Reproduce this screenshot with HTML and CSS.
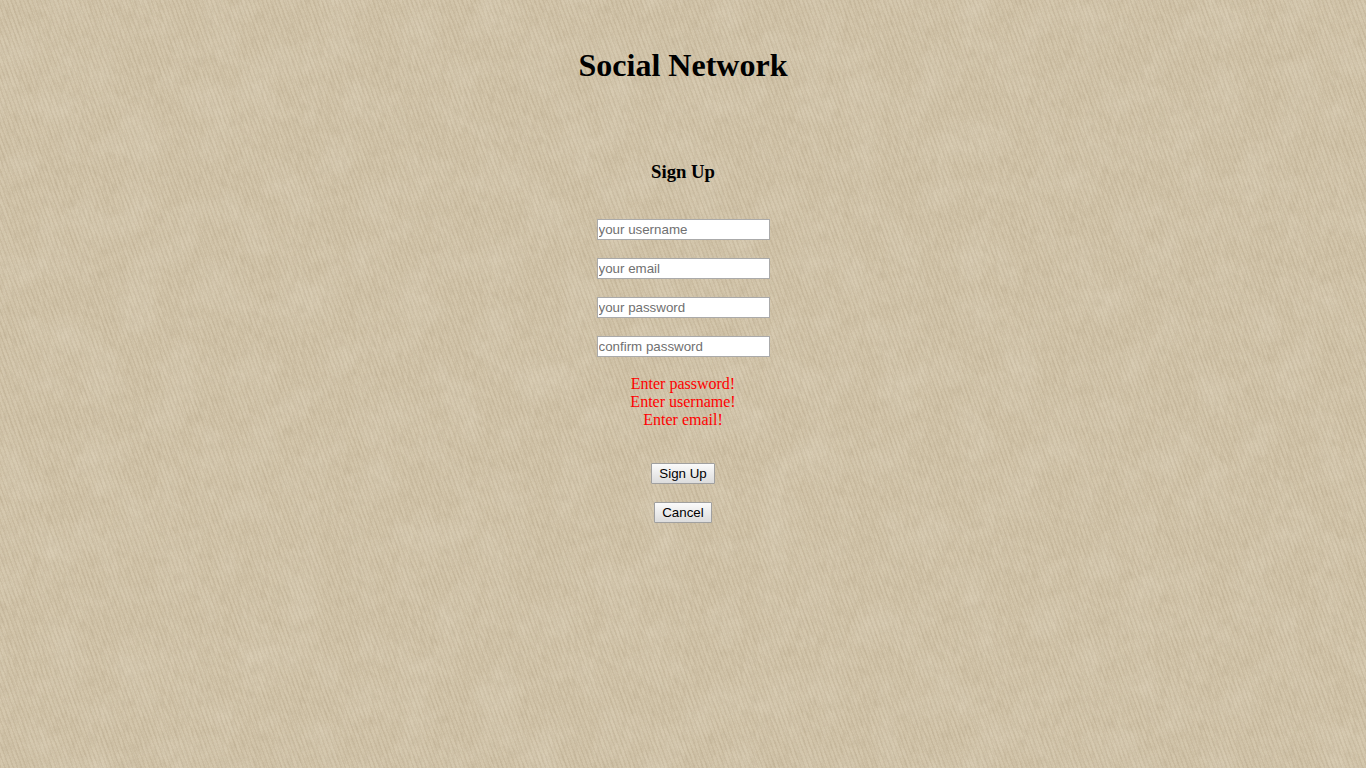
FILE: index.html
```html
<!DOCTYPE html>
<html lang="en">
<head>
  <meta charset="UTF-8">
  <title>Social Network</title>
  <link rel="stylesheet" href="styles.css">
</head>
<body>
  <!-- cloth texture behind the page -->
  <svg class="cloth" width="1366" height="768" aria-hidden="true">
    <filter id="twill" x="0" y="0" width="100%" height="100%">
      <feTurbulence type="fractalNoise" baseFrequency="0.45 0.09" numOctaves="2" seed="4"/>
      <feColorMatrix type="matrix" values="0 0 0 0 0.42  0 0 0 0 0.34  0 0 0 0 0.22  0.6 0 0 0 -0.23"/>
    </filter>
    <filter id="blotch" x="0" y="0" width="100%" height="100%">
      <feTurbulence type="fractalNoise" baseFrequency="0.025" numOctaves="3" seed="9"/>
      <feColorMatrix type="matrix" values="0 0 0 0 1  0 0 0 0 0.97  0 0 0 0 0.88  0.25 0 0 0 -0.1"/>
    </filter>
    <rect x="-300" y="-300" width="2000" height="1400" transform="rotate(-20 683 384)" filter="url(#twill)"/>
    <rect width="1366" height="768" filter="url(#blotch)"/>
  </svg>
  <div class="page">
    <h1 class="site-title">Social Network</h1>
    <form class="signup-form">
      <h3 class="signup-title">Sign Up</h3>
      <div class="signup-fields">
        <input class="signup-input" type="text" placeholder="your username">
        <input class="signup-input" type="text" placeholder="your email">
        <input class="signup-input" type="password" placeholder="your password">
        <input class="signup-input" type="password" placeholder="confirm password">
      </div>
      <div class="signup-errors">
        <div>Enter password!</div>
        <div>Enter username!</div>
        <div>Enter email!</div>
      </div>
      <div class="signup-actions">
        <button class="signup-button" type="button">Sign Up</button>
        <button class="signup-button" type="button">Cancel</button>
      </div>
    </form>
  </div>
</body>
</html>
```
FILE: styles.css
```css
html, body {
  height: 100%;
}
body {
  margin: 0;
  overflow: hidden;
  color: #000;
  font-family: "Liberation Serif", serif;
  background-color: #d1c3a8;
  background-image: repeating-linear-gradient(70deg, rgba(120, 100, 70, 0.08) 0 1.5px, rgba(255, 250, 235, 0.05) 1.5px 4px);
}
.cloth {
  position: absolute;
  top: 0;
  left: 0;
}
.page {
  position: relative;
}
.site-title {
  margin: 0;
  padding-top: 47px;
  font-size: 32px;
  line-height: 37px;
  text-align: center;
}
.signup-form {
  display: flex;
  flex-direction: column;
  align-items: center;
  padding-top: 77px;
}
.signup-title {
  margin: 0;
  font-size: 18.72px;
  line-height: 22px;
}
.signup-fields {
  display: flex;
  flex-direction: column;
  gap: 18px;
  margin-top: 36px;
}
.signup-input {
  box-sizing: border-box;
  width: 173px;
  height: 21px;
  padding: 1px;
  border: 1px solid #aaa;
  border-radius: 0;
  background: #fff;
  font-family: "Liberation Sans", Arial, sans-serif;
  font-size: 13.33px;
  outline: none;
}
.signup-input::placeholder {
  color: #707070;
}
.signup-errors {
  margin-top: 18px;
  color: #f00;
  font-size: 16px;
  line-height: 18px;
  text-align: center;
}
.signup-actions {
  display: flex;
  flex-direction: column;
  align-items: center;
  gap: 18px;
  margin-top: 34px;
}
.signup-button {
  box-sizing: border-box;
  height: 21px;
  padding: 0 7px;
  border: 1px solid #a0a0a0;
  border-radius: 1px;
  background: linear-gradient(#fbfbfb, #dcdcdc);
  color: #000;
  font-family: "Liberation Sans", Arial, sans-serif;
  font-size: 13.33px;
}
```
